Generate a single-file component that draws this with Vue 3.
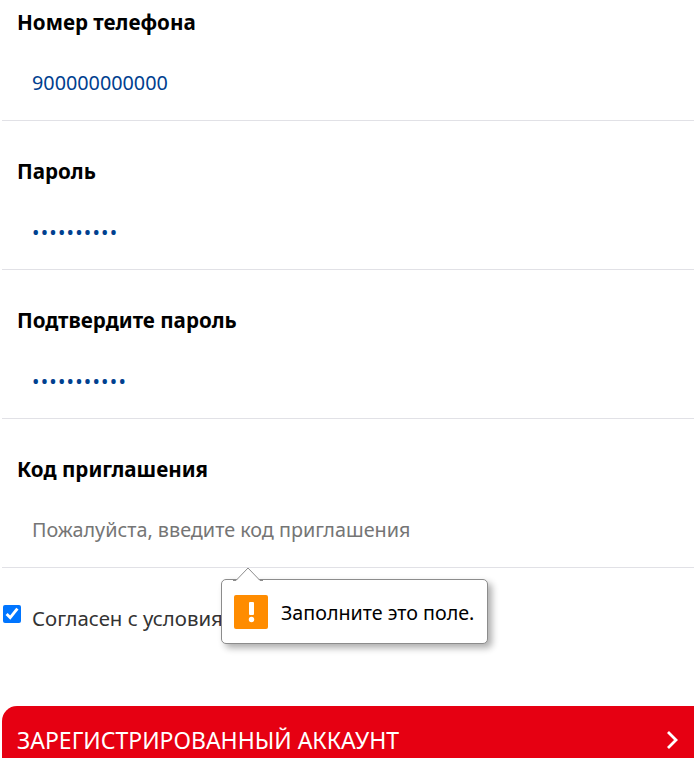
<script setup>
const fields = [
  { label: 'Номер телефона', type: 'text', value: '900000000000' },
  { label: 'Пароль', type: 'password', value: '1234567890' },
  { label: 'Подтвердите пароль', type: 'password', value: '12345678901' },
  { label: 'Код приглашения', type: 'text', value: '', placeholder: 'Пожалуйста, введите код приглашения' }
]
</script>

<template>
  <form class="page" novalidate @submit.prevent>
    <div v-for="f in fields" :key="f.label" class="row">
      <label class="label">{{ f.label }}</label>
      <input class="input" :class="{ secret: f.type === 'password' }" :type="f.type" :value="f.value" :placeholder="f.placeholder" />
    </div>
    <div class="agree">
      <input class="check" type="checkbox" checked />
      <span class="agree-text">Согласен с условиями</span>
      <div class="tip">
        <svg class="tip-arrow" width="30" height="14" viewBox="0 0 30 14">
          <path d="M0 13.5H3L15 1L27 13.5H30" fill="#fff" stroke="#8c8c8c" stroke-width="1" />
        </svg>
        <span class="tip-icon">
          <svg width="34" height="34" viewBox="0 0 34 34">
            <rect x="15" y="7" width="5" height="13" rx="1" fill="#fff" />
            <circle cx="17.5" cy="24.5" r="2.7" fill="#fff" />
          </svg>
        </span>
        <span class="tip-text">Заполните это поле.</span>
      </div>
    </div>
    <button class="submit" type="submit">
      <span>ЗАРЕГИСТРИРОВАННЫЙ АККАУНТ</span>
      <svg width="12" height="20" viewBox="0 0 12 20">
        <path d="M2 2L10 10L2 18" fill="none" stroke="#fff" stroke-width="2.8" />
      </svg>
    </button>
  </form>
</template>

<style scoped>
.page {
  height: 758px;
  overflow: hidden;
  padding-left: 2px;
  box-sizing: border-box;
  font-family: "Noto Sans", "Open Sans", sans-serif;
  display: flex;
  flex-direction: column;
}
.row {
  height: 149px;
  flex: none;
  box-sizing: border-box;
  border-bottom: 1px solid #e1e1e6;
  padding: 36px 0 0 15px;
  display: flex;
  flex-direction: column;
}
.row:first-child {
  height: 121px;
  padding-top: 8px;
}
.label {
  font-size: 20.6px;
  font-weight: 700;
  line-height: 29px;
  color: #000;
}
.input {
  margin-top: 23px;
  margin-left: 15px;
  height: 44px;
  border: 0;
  outline: 0;
  padding: 0;
  width: 640px;
  font: inherit;
  font-size: 19.8px;
  color: #00408f;
  background: transparent;
}
.secret {
  letter-spacing: 1.2px;
  padding-top: 1px;
}
.input::placeholder {
  color: #757575;
  opacity: 1;
}
.agree {
  position: relative;
  height: 138px;
  flex: none;
  display: flex;
  align-items: flex-start;
  padding-top: 37px;
  box-sizing: border-box;
}
.check {
  width: 18px;
  height: 18px;
  margin: 0 0 0 1px;
  flex: none;
}
.agree-text {
  margin-left: 11px;
  margin-top: -1px;
  font-size: 20.4px;
  line-height: 28px;
  color: #333;
  white-space: nowrap;
}
.tip {
  position: absolute;
  left: 219px;
  top: 11px;
  width: 267px;
  height: 65px;
  box-sizing: border-box;
  background: #fff;
  border: 1px solid #8c8c8c;
  border-radius: 5px;
  box-shadow: 4px 4px 7px rgba(0, 0, 0, 0.32);
  display: flex;
  align-items: center;
  padding-left: 12px;
}
.tip-arrow {
  position: absolute;
  left: 11px;
  top: -13px;
}
.tip-icon {
  width: 34px;
  height: 34px;
  flex: none;
  background: #ff8c00;
  border-radius: 2px;
  display: block;
}
.tip-icon svg {
  display: block;
}
.tip-text {
  margin-left: 13px;
  margin-top: 2px;
  font-size: 19.7px;
  color: #000;
  white-space: nowrap;
}
.submit {
  flex: none;
  height: 72px;
  width: 100%;
  border: 0;
  border-radius: 15px 0 0 0;
  background: #e60012;
  color: #fff;
  font: inherit;
  font-size: 23px;
  display: flex;
  align-items: center;
  justify-content: space-between;
  padding: 0 16px 4px 15px;
}
</style>
